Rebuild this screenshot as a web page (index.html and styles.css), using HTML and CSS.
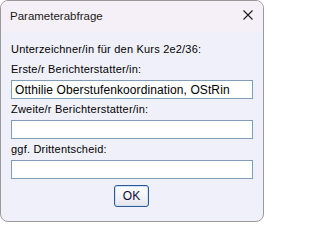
FILE: index.html
```html
<!DOCTYPE html>
<html lang="de">
<head>
<meta charset="utf-8">
<title>Parameterabfrage</title>
<link rel="stylesheet" href="styles.css">
</head>
<body>
<div class="window">
  <div class="titlebar">
    <span class="title">Parameterabfrage</span>
    <svg class="close" width="10" height="10" viewBox="0 0 10 10"><path d="M0.5 0.5 L9.5 9.5 M9.5 0.5 L0.5 9.5" stroke="#1a1a1a" stroke-width="1.1" fill="none"/></svg>
  </div>
  <div class="content">
    <div class="label intro">Unterzeichner/in für den Kurs 2e2/36:</div>
    <div class="field">
      <div class="label">Erste/r Berichterstatter/in:</div>
      <input class="input" type="text" value="Otthilie Oberstufenkoordination, OStRin">
    </div>
    <div class="field">
      <div class="label">Zweite/r Berichterstatter/in:</div>
      <input class="input" type="text" value="">
    </div>
    <div class="field">
      <div class="label">ggf. Drittentscheid:</div>
      <input class="input" type="text" value="">
    </div>
    <div class="actions">
      <button class="btn" type="button">OK</button>
    </div>
  </div>
</div>
</body>
</html>
```

FILE: styles.css
```css
html, body {
  margin: 0;
  padding: 0;
  background: #ffffff;
}

.window {
  box-sizing: border-box;
  width: 264px;
  height: 222px;
  border: 1px solid #9a9a9a;
  border-radius: 8px;
  overflow: hidden;
  background: #f0f0fa;
  font-family: "Liberation Sans", Arial, sans-serif;
  color: #000;
}

.titlebar {
  box-sizing: border-box;
  height: 31px;
  padding: 8px 0 0 9px;
  background: #f5f0f7;
  display: flex;
  align-items: flex-start;
}

.title {
  font-size: 11.5px;
  line-height: 15px;
  color: #1a1a1a;
}

.close {
  margin-left: auto;
  margin-right: 10px;
  margin-top: 1px;
}

.content {
  padding: 11px 9px 0 10px;
}

.label {
  font-size: 11px;
  line-height: 13px;
  height: 13px;
  letter-spacing: 0.2px;
  white-space: nowrap;
}

.intro {
  margin-bottom: 7px;
}

.field {
  display: flex;
  flex-direction: column;
  gap: 4px;
  margin-bottom: 4px;
}

.input {
  box-sizing: border-box;
  width: 242px;
  height: 19px;
  margin: 0;
  padding: 0 3px;
  border: 1px solid #7f9db9;
  border-radius: 0;
  background: #ffffff;
  font-family: "Liberation Sans", Arial, sans-serif;
  font-size: 12px;
  letter-spacing: 0.1px;
  color: #000;
  outline: none;
}

.actions {
  display: flex;
  justify-content: center;
  margin-top: 6px;
  padding-right: 2px;
}

.btn {
  box-sizing: border-box;
  width: 35px;
  height: 22px;
  margin: 0;
  padding: 0;
  border: 1px solid #2a5a9a;
  border-radius: 3px;
  background: linear-gradient(#ffffff, #f2f2f6 60%, #e4e4ec);
  box-shadow: inset 0 0 0 1px #cfe0f7;
  font-family: "Liberation Sans", Arial, sans-serif;
  font-size: 12px;
  color: #0a0a3a;
}
```
